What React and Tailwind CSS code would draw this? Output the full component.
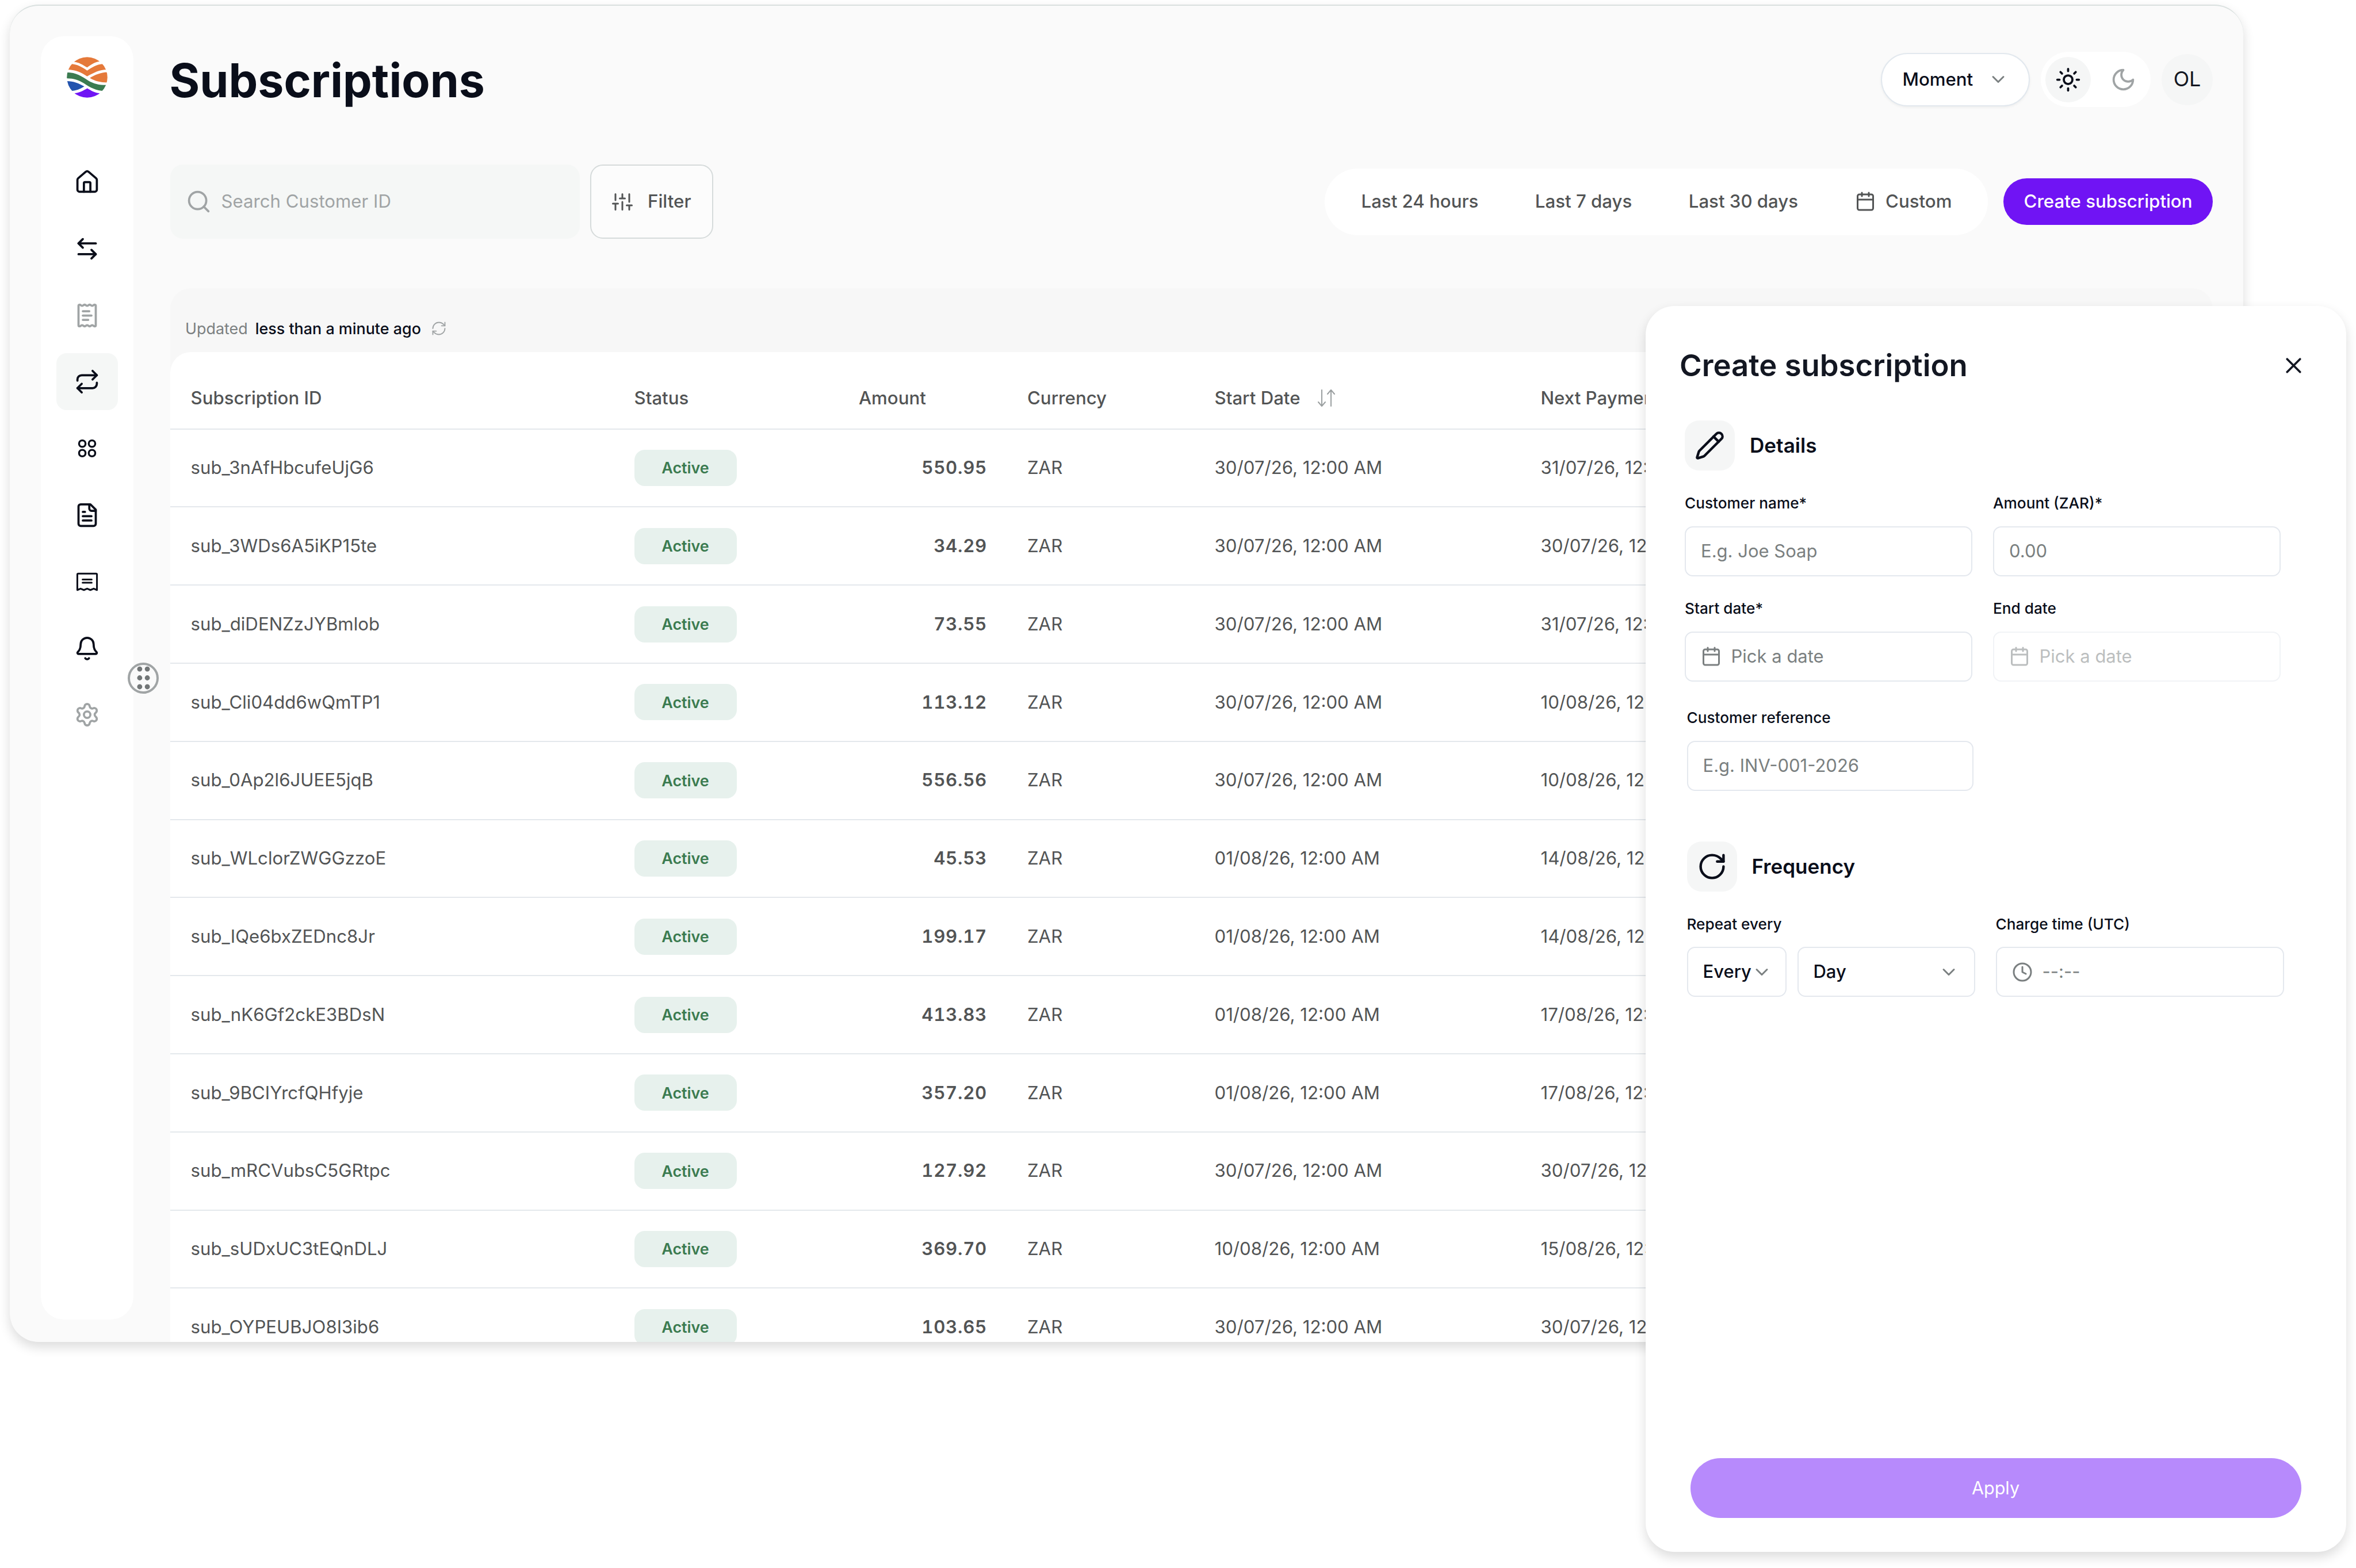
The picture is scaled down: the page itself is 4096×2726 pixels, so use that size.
import React from "react";
import {
  House, ArrowLeftRight, ReceiptText, Repeat, Bell, Settings, GripVertical,
  Search, RefreshCw, ChevronDown, Sun, Calendar, X, Pencil, RotateCw, Clock,
} from "lucide-react";

const rows = [
  ["sub_3nAfHbcufeUjG6", "550.95", "30/07/26, 12:00 AM", "31/07/26, 12:00 AM"],
  ["sub_3WDs6A5iKP15te", "34.29", "30/07/26, 12:00 AM", "30/07/26, 12:00 AM"],
  ["sub_diDENZzJYBmlob", "73.55", "30/07/26, 12:00 AM", "31/07/26, 12:00 AM"],
  ["sub_Cli04dd6wQmTP1", "113.12", "30/07/26, 12:00 AM", "10/08/26, 12:00 AM"],
  ["sub_0Ap2l6JUEE5jqB", "556.56", "30/07/26, 12:00 AM", "10/08/26, 12:00 AM"],
  ["sub_WLclorZWGGzzoE", "45.53", "01/08/26, 12:00 AM", "14/08/26, 12:00 AM"],
  ["sub_IQe6bxZEDnc8Jr", "199.17", "01/08/26, 12:00 AM", "14/08/26, 12:00 AM"],
  ["sub_nK6Gf2ckE3BDsN", "413.83", "01/08/26, 12:00 AM", "17/08/26, 12:00 AM"],
  ["sub_9BCIYrcfQHfyje", "357.20", "01/08/26, 12:00 AM", "17/08/26, 12:00 AM"],
  ["sub_mRCVubsC5GRtpc", "127.92", "30/07/26, 12:00 AM", "30/07/26, 12:00 AM"],
  ["sub_sUDxUC3tEQnDLJ", "369.70", "10/08/26, 12:00 AM", "15/08/26, 12:00 AM"],
  ["sub_OYPEUBJO8I3ib6", "103.65", "30/07/26, 12:00 AM", "30/07/26, 12:00 AM"],
];

const Logo = () => (
  <svg className="size-[71px] shrink-0" viewBox="45 36 286 288">
    <clipPath id="disc"><circle cx="188" cy="180" r="143" /></clipPath>
    <g clipPath="url(#disc)">
      <path fill="#e5793a" d="M85 71H98C125 71 158 92 188 110C210 94 235 74 275 67H290V30H85Z" />
      <path fill="#e5793a" d="M60 86H80C118 88 155 110 188 132C220 112 255 88 297 86H320L335 125C285 122 232 146 188 173C150 146 105 124 40 125Z" />
      <path fill="#e5793a" d="M207 184C245 160 285 144 340 143V216C290 218 245 208 207 184Z" />
      <path fill="#3b7b50" d="M40 144C110 144 150 172 195 202C235 226 275 235 330 234L310 276C250 275 210 252 165 222C130 198 90 186 40 187Z" />
      <path fill="#2354ae" d="M40 206C90 205 130 222 168 244C140 262 110 274 78 275L40 276Z" />
      <path fill="#7014f4" d="M90 292H98C135 289 162 272 189 257C215 273 240 288 275 292H285V330H90Z" />
    </g>
  </svg>
);

const Svg = ({ className = "size-[45px]", stroke = 2, children }) => (
  <svg className={className} viewBox="0 0 24 24" fill="none" stroke="currentColor" strokeWidth={stroke} strokeLinecap="round" strokeLinejoin="round">
    {children}
  </svg>
);

const CirclesIcon = () => (
  <Svg stroke={1.8}>
    <circle cx="7.5" cy="7.6" r="3" />
    <circle cx="16.5" cy="7.6" r="3" />
    <circle cx="7.5" cy="16.4" r="3" />
    <circle cx="16.5" cy="16.4" r="3" />
  </Svg>
);

const FileIcon = () => (
  <Svg>
    <path d="M15 2H6a2 2 0 0 0-2 2v16a2 2 0 0 0 2 2h12a2 2 0 0 0 2-2V7Z" />
    <path d="M14 2v4a2 2 0 0 0 2 2h4" />
    <path d="M10 9H8M16 13H8M16 17H8" />
  </Svg>
);

const InvoiceIcon = () => (
  <Svg stroke={1.6}>
    <path d="M2.9 19.6V5.2a.8.8 0 0 1 .8-.8h16.6a.8.8 0 0 1 .8.8v14.4l-3-1.3-3.1 1.3-3-1.3-3 1.3-3.1-1.3Z" />
    <path d="M7.8 9.8h8.4M7.8 12.8h8.4" />
  </Svg>
);

const MoonIcon = () => (
  <Svg>
    <path d="M12 3a6 6 0 0 0 9 9 9 9 0 1 1-9-9Z" />
  </Svg>
);

const SlidersIcon = () => (
  <Svg className="size-[36px]">
    <path d="M4 21v-7M4 10V3M12 21v-9M12 8V3M20 21v-5M20 12V3M1 14h6M9 8h6M17 16h6" />
  </Svg>
);

const SortIcon = () => (
  <svg className="h-[30px] w-[32px] text-[#9a9fa0]" viewBox="0 0 32 30" fill="none" stroke="currentColor" strokeWidth="2" strokeLinecap="round" strokeLinejoin="round">
    <path d="M8 1v28M2 22l6 7 6-7M24 29V1M18 8l6-7 6 7" />
  </svg>
);

const ico = "size-[45px]";
const nav = [
  { icon: <House className={ico} /> },
  { icon: <ArrowLeftRight className={ico} /> },
  { icon: <ReceiptText className={ico} />, muted: true },
  { icon: <Repeat className={ico} />, active: true },
  { icon: <CirclesIcon /> },
  { icon: <FileIcon /> },
  { icon: <InvoiceIcon /> },
  { icon: <Bell className={ico} /> },
  { icon: <Settings className={ico} />, muted: true },
];

function Sidebar() {
  return (
    <aside className="relative mt-[53px] ml-[54px] flex h-[2231px] w-[160.5px] shrink-0 flex-col items-center rounded-[40px] bg-white pt-[36px]">
      <Logo />
      <nav className="mt-[97px] flex flex-col gap-[16.8px]">
        {nav.map((n, i) => (
          <div
            key={i}
            className={`flex h-[99px] w-[107px] items-center justify-center rounded-[18px] ${n.active ? "bg-[#f5f7f6]" : ""} ${n.muted ? "text-[#a0a4a5]" : "text-[#0a0e1a]"}`}
          >
            {n.icon}
          </div>
        ))}
      </nav>
      <div className="absolute top-[1088.5px] left-[151px] flex size-[54px] items-center justify-center rounded-full border-[4.5px] border-[#a0a4a5] bg-[#fafafa] text-[#727677]">
        <GripVertical className="size-[53px] shrink-0" />
      </div>
    </aside>
  );
}

function Header() {
  return (
    <header className="flex h-[96px] items-center">
      <h1 className="mt-[4px] -ml-px text-[80.6px] leading-none font-bold text-[#0a0e1a]">Subscriptions</h1>
      <div className="ml-auto flex items-center gap-[19px]">
        <div className="flex h-[93px] w-[259px] items-center justify-between rounded-full border-2 border-[#e2e8ee] bg-white pr-[35px] pl-[35.5px] text-[31.2px] font-medium text-[#0a0e1a] shadow-[0_2px_4px_rgba(0,0,0,0.05)]">
          Moment
          <ChevronDown className="size-[36px] text-[#7b8081]" />
        </div>
        <div className="flex h-[96px] items-center gap-[17px] rounded-full bg-white px-[8px] text-[#0a0e1a]">
          <span className="flex size-[79px] items-center justify-center rounded-full bg-[#f5f6f6]"><Sun className="size-[45px]" /></span>
          <span className="flex size-[79px] items-center justify-center text-[#a0a4a5]"><MoonIcon /></span>
        </div>
        <div className="flex size-[89px] items-center justify-center rounded-full bg-[#f5f6f6] text-[35.9px] text-[#131722]">OL</div>
      </div>
    </header>
  );
}

function Toolbar() {
  return (
    <div className="mt-[100px] flex h-[129px] items-center">
      <div className="flex h-full w-[712px] items-center gap-[17px] rounded-[22px] bg-[#f5f7f6] pl-[27px] text-[31.2px] text-[#a0a4a5]">
        <Search className="size-[45px]" />
        Search Customer ID
      </div>
      <div className="ml-[18.5px] flex h-full w-[214px] items-center gap-[26px] rounded-[22px] border-[2.4px] border-[#d6dbdb] bg-[#fcfcfc] pl-[36px] text-[31.3px] font-medium text-[#525455]">
        <SlidersIcon />
        Filter
      </div>
      <div className="ml-auto flex h-[116px] w-[1153px] items-center gap-[98.5px] rounded-full bg-white pl-[63.5px] text-[31.2px] font-medium whitespace-nowrap text-[#525455]">
        <span>Last 24 hours</span>
        <span>Last 7 days</span>
        <span>Last 30 days</span>
        <span className="flex items-center gap-[17.5px]">
          <Calendar className="size-[36px]" />
          Custom
        </span>
      </div>
      <div className="ml-[27px] flex h-[81px] w-[364px] items-center justify-center rounded-full bg-[#7014f4] text-[31.2px] font-medium text-white">
        Create subscription
      </div>
    </div>
  );
}

const cols = "grid grid-cols-[771px_390.5px_223px_70px_325.5px_567px_1fr] items-center border-b-[2.4px] border-[#e4e8ec] pl-[36px] whitespace-nowrap";

function Table() {
  return (
    <section className="mt-[86px] rounded-t-[36px] bg-[#f7f7f7]">
      <div className="flex h-[111px] items-center pt-[29px] pl-[26.5px] text-[26.9px] text-[#7b8081]">
        Updated
        <span className="ml-[13px] font-medium text-[#0a0e1a]">less than a minute ago</span>
        <RefreshCw className="ml-[17px] size-[28px] text-[#a0a4a5]" strokeWidth={1.6} />
      </div>
      <div className="rounded-t-[36px] bg-white text-[31.2px] text-[#525455]">
        <div className={`${cols} h-[134.7px] pt-[28px] font-medium`}>
          <span>Subscription ID</span>
          <span>Status</span>
          <span>Amount</span>
          <span />
          <span>Currency</span>
          <span className="flex items-center gap-[29px]">Start Date <SortIcon /></span>
          <span>Next Payment Date</span>
        </div>
        {rows.map(([id, amount, start, next]) => (
          <div key={id} className={`${cols} h-[135.8px]`}>
            <span>{id}</span>
            <span className="flex h-[63px] w-[178px] items-center justify-center rounded-[18px] bg-[#e7f1ed] text-[26.9px] font-semibold text-[#3b7b50]">Active</span>
            <span className="text-right font-semibold tracking-[0.75px] tabular-nums">{amount}</span>
            <span />
            <span>ZAR</span>
            <span>{start}</span>
            <span>{next}</span>
          </div>
        ))}
      </div>
    </section>
  );
}

const Field = ({ label, className = "w-[500px]", children }) => (
  <div className={`flex flex-col ${className}`}>
    <span className="text-[26.2px] leading-[32px] font-medium whitespace-nowrap text-[#0a0e1a]">{label}</span>
    <div className="mt-[23.5px] flex gap-[19px]">{children}</div>
  </div>
);

const Box = ({ className = "", children }) => (
  <div className={`flex h-[87px] items-center rounded-[14px] border-2 border-[#e4e8ee] px-[26px] text-[31px] ${className}`}>{children}</div>
);

const SectionHead = ({ icon, children }) => (
  <div className="flex items-center gap-[26px] text-[35.1px] font-semibold text-[#0a0e1a]">
    <span className="flex size-[87px] items-center justify-center rounded-[25px] bg-[#f5f6f6]">{icon}</span>
    {children}
  </div>
);

function Panel() {
  return (
    <div className="absolute top-[532px] left-[2860.5px] flex h-[2166px] w-[1218px] flex-col rounded-[50px] bg-white pt-[73px] pb-[59px] shadow-[0_9px_20px_rgba(0,0,0,0.14)]">
      <div className="flex h-[60px] items-center justify-between pr-[68.5px] pl-[59.5px] text-[52.6px] font-semibold text-[#131722]">
        Create subscription
        <X className="size-[45px]" />
      </div>
      <div className="mt-[66px] pl-[68.5px] text-[#7a7f80]">
        <SectionHead icon={<Pencil className="size-[53px]" />}>Details</SectionHead>
        <div className="mt-[41px] flex gap-[36px]">
          <Field label="Customer name*"><Box className="w-full">E.g. Joe Soap</Box></Field>
          <Field label="Amount (ZAR)*"><Box className="w-full">0.00</Box></Field>
        </div>
        <div className="mt-[40.5px] flex gap-[36px]">
          <Field label="Start date*">
            <Box className="w-full gap-[16.5px]"><Calendar className="size-[36px]" />Pick a date</Box>
          </Field>
          <Field label="End date">
            <Box className="w-full gap-[16.5px] opacity-50"><Calendar className="size-[36px]" />Pick a date</Box>
          </Field>
        </div>
      </div>
      <div className="mt-[47.5px] pl-[72px] text-[#7a7f80]">
        <Field label="Customer reference" className="w-[498px]"><Box className="w-full">E.g. INV-001-2026</Box></Field>
        <div className="mt-[88.5px]">
          <SectionHead icon={<RotateCw className="size-[53px]" />}>Frequency</SectionHead>
        </div>
        <div className="mt-[40.5px] flex gap-[36px]">
          <Field label="Repeat every" className="w-[501px]">
            <Box className="w-[173px] justify-between pr-[25px] font-medium text-[#0a0e1a]">
              Every<ChevronDown className="size-[36px] shrink-0 text-[#7b8081]" />
            </Box>
            <Box className="w-[309px] justify-between font-medium text-[#0a0e1a]">
              Day<ChevronDown className="size-[36px] text-[#7b8081]" />
            </Box>
          </Field>
          <Field label="Charge time (UTC)" className="w-[501px]">
            <Box className="w-full gap-[17px]"><Clock className="size-[36px]" />--:--</Box>
          </Field>
        </div>
      </div>
      <div className="mx-auto mt-auto flex h-[104px] w-[1062px] items-center justify-center rounded-full bg-[#b78afc] text-[30.5px] text-white">Apply</div>
    </div>
  );
}

export default function App() {
  return (
    <div className="relative h-[2726px] w-[4096px] overflow-hidden bg-white pt-[8px] pl-[17px] font-['Inter',sans-serif]">
      <div className="flex h-[2325px] w-[3883px] overflow-hidden rounded-[50px] border-t-2 border-[#d9e0df] bg-[#fafafa] shadow-[0_9px_20px_rgba(0,0,0,0.14)]">
        <Sidebar />
        <main className="ml-[64px] w-[3551.5px] pt-[80px]">
          <Header />
          <Toolbar />
          <Table />
        </main>
      </div>
      <Panel />
    </div>
  );
}
